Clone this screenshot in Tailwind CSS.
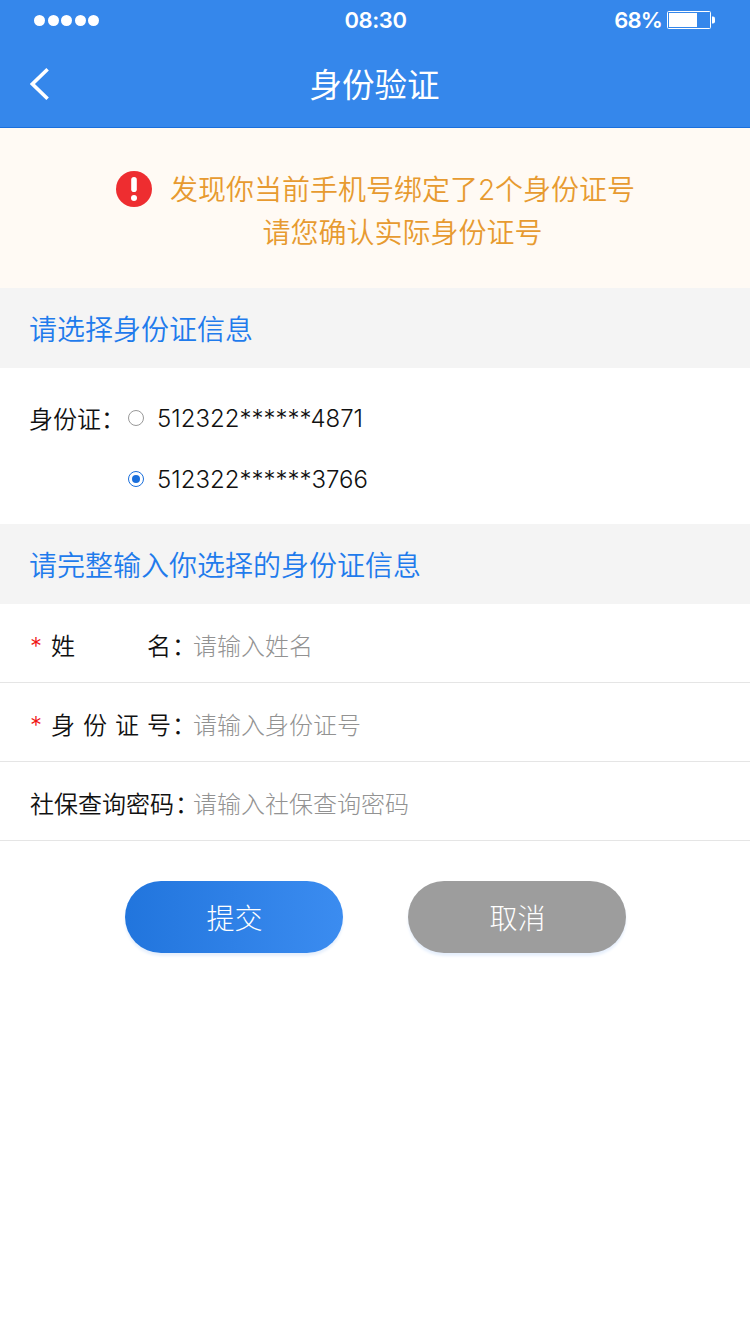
<!DOCTYPE html>
<html lang="zh-CN">
<head>
    <meta charset="UTF-8">
    <meta name="viewport" content="width=device-width, initial-scale=1.0">
    <title>身份验证</title>
    <script src="https://cdn.jsdelivr.net/npm/@tailwindcss/browser@4"></script>
</head>
<body class="min-h-screen bg-white font-['Inter','Noto_Sans_CJK_SC',sans-serif] font-[350] text-2xl text-[#111]">
    <header class="h-32 bg-[#3587eb] border-b border-[#1a6fdc] text-white">
        <!-- Status bar -->
        <div class="h-10 grid grid-cols-3 items-center pl-[34px] pr-[35px] text-[22px] font-semibold tracking-[-0.4px]">
            <div class="flex gap-[2.5px]">
                <span class="size-[11px] rounded-full bg-white"></span>
                <span class="size-[11px] rounded-full bg-white"></span>
                <span class="size-[11px] rounded-full bg-white"></span>
                <span class="size-[11px] rounded-full bg-white"></span>
                <span class="size-[11px] rounded-full bg-white"></span>
            </div>
            <span class="text-center pt-0.5 pl-0.5">08:30</span>
            <div class="flex items-center justify-end gap-[5px]">
                <span class="pt-0.5 tracking-[-0.8px]">68%</span>
                <svg width="48" height="18" viewBox="0 0 48 18" fill="none">
                    <rect x="0.5" y="0.5" width="43" height="17" rx="1" stroke="#fff" />
                    <rect x="2" y="2" width="28" height="14" fill="#fff" />
                    <path d="M45 5.5h1a2 2 0 0 1 2 2v3a2 2 0 0 1-2 2h-1z" fill="#fff" />
                </svg>
            </div>
        </div>
        <!-- Nav bar -->
        <div class="h-[88px] grid grid-cols-3 items-center px-[30px]">
            <a href="#" aria-label="返回">
                <svg width="20" height="32" viewBox="0 0 20 32" fill="none" stroke="#fff" stroke-width="3.6">
                    <path d="M17.6 1.3 2.4 16l15.2 14.7" />
                </svg>
            </a>
            <h1 class="pt-1 -ml-px text-center text-[32.5px] font-normal whitespace-nowrap">身份验证</h1>
        </div>
    </header>

    <div class="h-40 pt-[41px] pl-px flex justify-center gap-[18px] bg-[#fffaf4] text-[28px] leading-[43px] text-[#e79a30]">
        <svg class="mt-0.5" width="36" height="36" viewBox="0 0 36 36">
            <circle cx="18" cy="18" r="18" fill="#ee2d30" />
            <rect x="15.2" y="6" width="5.6" height="15" rx="2.8" fill="#fff" />
            <circle cx="18" cy="27" r="3" fill="#fff" />
        </svg>
        <p class="text-center">发现你当前手机号绑定了2个身份证号<br>请您确认实际身份证号</p>
    </div>

    <h2 class="h-20 flex items-center pt-1.5 px-[29px] bg-[#f4f4f4] text-[28px] font-[350] text-[#1f7bec]">请选择身份证信息</h2>
    <div class="h-[156px] flex items-start pl-[29px] pt-5 leading-[61px]">
        <span class="w-[99px] pt-px">身份证：</span>
        <div>
            <label class="flex items-center gap-[13px]">
                <input type="radio" name="idcard" class="mb-0.5 appearance-none size-4 rounded-full border border-[#999]">
                <span class="font-light">512322******4871</span>
            </label>
            <label class="flex items-center gap-[13px]">
                <input type="radio" name="idcard" checked class="mb-0.5 appearance-none size-4 rounded-full border border-[#1a6fdc] bg-[#1a6fdc] bg-clip-content p-[3px]">
                <span class="font-light">512322******3766</span>
            </label>
        </div>
    </div>

    <h2 class="h-20 flex items-center pt-1.5 px-[29px] bg-[#f4f4f4] text-[28px] font-[350] text-[#1f7bec]">请完整输入你选择的身份证信息</h2>
    <form>
        <div class="h-[79px] flex items-center pt-2 pl-[30px] border-b border-[#e5e5e5]">
            <span class="w-[21px] font-light text-[#f01414]">*</span>
            <label class="w-[121px] pr-px flex justify-between"><span>姓</span><span>名</span></label>
            <span class="w-[21px]">：</span>
            <input type="text" placeholder="请输入姓名" class="flex-1 outline-none font-light placeholder:text-[#929292]">
        </div>
        <div class="h-[79px] flex items-center pt-2 pl-[30px] border-b border-[#e5e5e5]">
            <span class="w-[21px] font-light text-[#f01414]">*</span>
            <label class="w-[121px] pr-px flex justify-between"><span>身</span><span>份</span><span>证</span><span>号</span></label>
            <span class="w-[21px]">：</span>
            <input type="text" placeholder="请输入身份证号" class="flex-1 outline-none font-light placeholder:text-[#929292]">
        </div>
        <div class="h-[79px] flex items-center pt-2 pl-[30px] border-b border-[#e5e5e5]">
            <label class="w-[145px]">社保查询密码</label>
            <span class="w-[18px]">：</span>
            <input type="text" placeholder="请输入社保查询密码" class="flex-1 outline-none font-light placeholder:text-[#929292]">
        </div>
        <div class="pt-10 flex justify-center gap-[65px] text-[28px] font-light text-white">
            <button type="button" class="w-[218px] h-[72px] pt-1.5 pl-0.5 rounded-full bg-linear-to-r from-[#2175dd] to-[#3b8cf0] shadow-[0_3px_3px_#e6effc]">提交</button>
            <button type="button" class="w-[218px] h-[72px] pt-1.5 pl-0.5 rounded-full bg-[#9d9d9d] shadow-[0_3px_3px_#e6effc]">取消</button>
        </div>
    </form>
</body>
</html>
